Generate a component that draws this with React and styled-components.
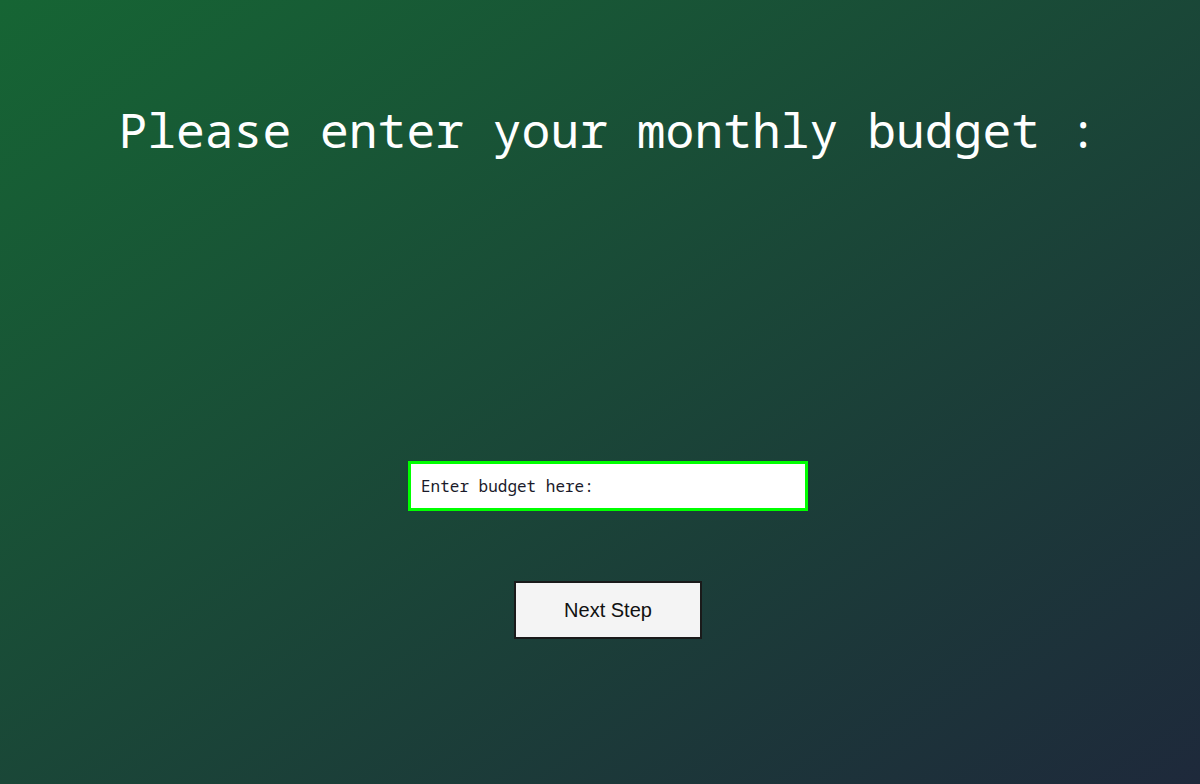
import React from "react";
import styled, { createGlobalStyle } from "styled-components";

const GlobalStyle = createGlobalStyle`
  html, body {
    margin: 0;
    padding: 0;
  }
  body {
    min-height: 100vh;
    background: linear-gradient(to bottom right, #166534, #1e293b);
  }
`;

export default function App() {
  return (
    <>
      <GlobalStyle />
      <Page>
        <Title>Please enter your monthly budget :</Title>
        <Form onSubmit={(e) => e.preventDefault()}>
          <BudgetInput type="text" placeholder="Enter budget here:" />
          <NextButton type="submit">Next Step</NextButton>
        </Form>
      </Page>
    </>
  );
}

const Page = styled.div`
  min-height: 784px;
  display: flex;
  flex-direction: column;
  align-items: center;
  padding-left: 16px;
  box-sizing: border-box;
`;

const Title = styled.h1`
  margin: 100px 0 0;
  font-family: "Noto Sans Mono", "DejaVu Sans Mono", monospace;
  font-size: 48px;
  font-weight: normal;
  line-height: 60px;
  color: #ffffff;
`;

const Form = styled.form`
  margin-top: 301px;
  display: flex;
  flex-direction: column;
  align-items: center;
  gap: 70px;
`;

const BudgetInput = styled.input`
  width: 400px;
  height: 50px;
  box-sizing: border-box;
  border: 3px solid #00ff00;
  outline: none;
  padding: 0 10px;
  background: #ffffff;
  font-family: "Noto Sans Mono", "DejaVu Sans Mono", monospace;
  font-size: 16px;
  color: #111;

  &::placeholder {
    color: #1a1a2a;
    opacity: 1;
  }
`;

const NextButton = styled.button`
  width: 188px;
  height: 58px;
  box-sizing: border-box;
  border: 2px solid #1a1a1a;
  background: #f4f4f4;
  font-family: "Liberation Sans", Arial, sans-serif;
  font-size: 20px;
  color: #111;
  cursor: pointer;
`;
